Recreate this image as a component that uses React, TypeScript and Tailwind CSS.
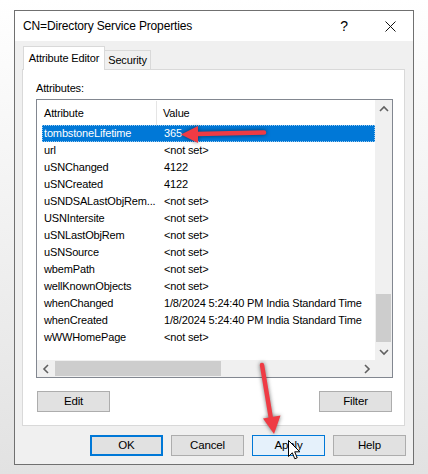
import React from "react";

const rows: [string, string][] = [
  ["tombstoneLifetime", "365"],
  ["url", "<not set>"],
  ["uSNChanged", "4122"],
  ["uSNCreated", "4122"],
  ["uSNDSALastObjRem...", "<not set>"],
  ["USNIntersite", "<not set>"],
  ["uSNLastObjRem", "<not set>"],
  ["uSNSource", "<not set>"],
  ["wbemPath", "<not set>"],
  ["wellKnownObjects", "<not set>"],
  ["whenChanged", "1/8/2024 5:24:40 PM India Standard Time"],
  ["whenCreated", "1/8/2024 5:24:40 PM India Standard Time"],
  ["wWWHomePage", "<not set>"],
];

const font = "font-['Liberation_Sans','Arial',sans-serif] tracking-[-0.15px]";

function Chevron({ dir }: { dir: "up" | "down" | "left" | "right" }) {
  const pts = {
    up: "1,6 5,2 9,6",
    down: "1,2 5,6 9,2",
    left: "6,1 2,5 6,9",
    right: "2,1 6,5 2,9",
  }[dir];
  const vertical = dir === "up" || dir === "down";
  return (
    <svg
      width={vertical ? 10 : 8}
      height={vertical ? 8 : 10}
      viewBox={vertical ? "0 0 10 8" : "0 0 8 10"}
    >
      <polyline points={pts} fill="none" stroke="#606060" strokeWidth="1.6" />
    </svg>
  );
}

function WinButton({
  label,
  variant = "normal",
}: {
  label: string;
  variant?: "normal" | "default" | "hover";
}) {
  const styles = {
    normal: "border border-[#adadad] bg-[#e1e1e1]",
    default: "border-2 border-[#0078d7] bg-[#e1e1e1]",
    hover: "border border-[#0078d7] bg-[#e5f1fb]",
  }[variant];
  return (
    <div
      className={`flex h-[21px] w-[73px] items-center justify-center text-[11.5px] text-black ${styles}`}
    >
      {label}
    </div>
  );
}

export default function App() {
  return (
    <div
      className={`relative h-[474px] w-[428px] overflow-hidden bg-linear-to-b from-white to-[#e2e2e2] pl-[14px] pt-[10px] ${font}`}
    >
      <div className="flex h-[455px] w-[400px] flex-col border border-[#707070] bg-[#f0f0f0]">
        {/* title bar */}
        <div className="flex h-[30px] items-center bg-white pl-[8px] pr-[17px]">
          <span className="text-[12px] text-black">CN=Directory Service Properties</span>
          <span className="ml-auto text-[14px] text-black">?</span>
          <svg width="11" height="11" viewBox="0 0 11 11" className="ml-[37px]">
            <path d="M0.5 0.5 L10.5 10.5 M10.5 0.5 L0.5 10.5" stroke="#111" strokeWidth="1" />
          </svg>
        </div>

        {/* body */}
        <div className="flex flex-1 flex-col px-[7px] pt-[5px]">
          <div className="relative z-10 ml-[1px] flex h-[24px] items-end whitespace-nowrap">
            <div className="flex h-[24px] w-[82px] items-center justify-center border border-b-0 border-[#d9d9d9] bg-white pb-[1px] text-[11px] text-black">
              Attribute Editor
            </div>
            <div className="mb-[1px] flex h-[19px] w-[46px] items-center justify-center border border-b-0 border-l-0 border-[#d9d9d9] bg-[#f0f0f0] text-[11px] text-black">
              Security
            </div>
          </div>

          <div className="-mt-[1px] flex h-[357px] w-[383px] flex-col border border-[#d9d9d9] bg-white pl-[13px] pt-[11px]">
            <div className="h-[14px] text-[11px] leading-[14px] text-black">Attributes:</div>

            {/* list box */}
            <div className="mt-[4px] grid h-[279px] w-[357px] grid-cols-[338px_17px] grid-rows-[260px_17px] border border-[#828790] bg-white text-[11px] text-black">
              <div className="overflow-hidden">
                <div className="flex h-[25px] items-center pt-[1px]">
                  <div className="flex h-full w-[120px] items-center border-r border-[#e5e5e5] pl-[7px]">
                    Attribute
                  </div>
                  <div className="pl-[6px]">Value</div>
                </div>
                {rows.map(([name, value], i) => (
                  <div
                    key={name}
                    className={`ml-[5px] flex h-[17px] items-center whitespace-nowrap ${
                      i === 0
                        ? "border border-dotted border-[#99c9ef] bg-[#0078d7] text-white"
                        : "border border-transparent"
                    }`}
                  >
                    <div className="w-[120px] shrink-0 pl-[1px]">{name}</div>
                    <div className="pl-[1px]">{value}</div>
                  </div>
                ))}
              </div>

              {/* vertical scrollbar */}
              <div className="flex flex-col bg-[#f0f0f0]">
                <div className="flex h-[17px] items-center justify-center">
                  <Chevron dir="up" />
                </div>
                <div className="flex flex-1 flex-col justify-end px-[1px] pb-[1px]">
                  <div className="h-[48px] bg-[#cdcdcd]" />
                </div>
                <div className="flex h-[17px] items-center justify-center">
                  <Chevron dir="down" />
                </div>
              </div>

              {/* horizontal scrollbar */}
              <div className="flex bg-[#f0f0f0]">
                <div className="flex w-[17px] items-center justify-center">
                  <Chevron dir="left" />
                </div>
                <div className="flex-1 py-[1px] pl-[1px]">
                  <div className="h-full w-[166px] bg-[#cdcdcd]" />
                </div>
                <div className="flex w-[17px] items-center justify-center">
                  <Chevron dir="right" />
                </div>
              </div>
              <div className="bg-[#f0f0f0]" />
            </div>

            <div className="mt-[13px] flex w-[357px] justify-between pl-[1px] pr-[1px]">
              <WinButton label="Edit" />
              <WinButton label="Filter" />
            </div>
          </div>

          <div className="mt-[9px] flex justify-end gap-[8px]">
            <WinButton label="OK" variant="default" />
            <WinButton label="Cancel" />
            <WinButton label="Apply" variant="hover" />
            <WinButton label="Help" />
          </div>
        </div>
      </div>

      {/* annotations */}
      <svg
        className="pointer-events-none absolute left-0 top-0 drop-shadow-[0_0_2px_rgba(0,0,0,0.55)]"
        width="428"
        height="474"
        viewBox="0 0 428 474"
      >
        <line x1="264" y1="132.5" x2="196" y2="134" stroke="#ef3b44" strokeWidth="4.5" strokeLinecap="round" />
        <polygon points="181,134.5 198,126 198,143" fill="#ef3b44" />
        <line x1="262" y1="365" x2="271" y2="419" stroke="#ef3b44" strokeWidth="4.5" strokeLinecap="round" />
        <polygon points="274,434 263,418.5 280.5,415.5" fill="#ef3b44" />
      </svg>
      <svg
        className="pointer-events-none absolute left-[288px] top-[440px]"
        width="13"
        height="21"
        viewBox="0 0 13 21"
      >
        <path
          d="M0.5 0.5 L0.5 16.5 L4.3 12.8 L6.8 18.8 L9.2 17.8 L6.7 11.8 L11.8 11.8 Z"
          fill="white"
          stroke="black"
          strokeWidth="1"
          strokeLinejoin="miter"
        />
      </svg>
    </div>
  );
}
